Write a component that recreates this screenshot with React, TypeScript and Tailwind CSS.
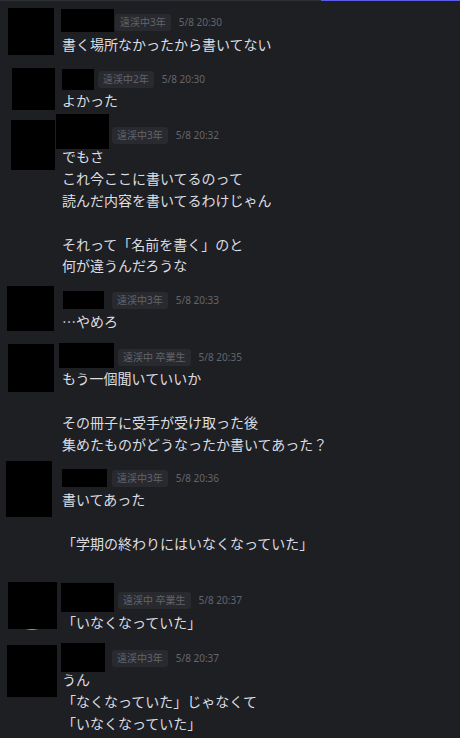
import React from "react";

type Msg = {
  mt: string;
  avatar: string;
  name: string;
  tag: string;
  tagMl: string;
  time: string;
  lines: string[];
  glow?: boolean;
};

const messages: Msg[] = [
  {
    mt: "mt-[11.5px]",
    avatar: "left-[8px] top-[-3.5px] w-[46px] h-[47px]",
    name: "left-[61px] top-[-2.5px] w-[53px] h-[23px]",
    tag: "遠渓中3年",
    tagMl: "ml-[53px]",
    time: "5/8 20:30",
    lines: ["書く場所なかったから書いてない"],
  },
  {
    mt: "mt-[13.2px]",
    avatar: "left-[12px] top-[-0.5px] w-[43px] h-[42px]",
    name: "left-[62px] top-[0.5px] w-[32px] h-[21px]",
    tag: "遠渓中2年",
    tagMl: "ml-[36px]",
    time: "5/8 20:30",
    lines: ["よかった"],
  },
  {
    mt: "mt-[12.2px]",
    avatar: "left-[11px] top-[-4.5px] w-[44px] h-[50px]",
    name: "left-[56px] top-[-10.5px] w-[53px] h-[35px]",
    tag: "遠渓中3年",
    tagMl: "ml-[50px]",
    time: "5/8 20:32",
    lines: [
      "でもさ",
      "これ今ここに書いてるのって",
      "読んだ内容を書いてるわけじゃん",
      "",
      "それって「名前を書く」のと",
      "何が違うんだろうな",
    ],
  },
  {
    mt: "mt-[12.2px]",
    avatar: "left-[7px] top-[-3.5px] w-[47px] h-[45px]",
    name: "left-[63px] top-[1.5px] w-[41px] h-[18px]",
    tag: "遠渓中3年",
    tagMl: "ml-[50px]",
    time: "5/8 20:33",
    lines: ["…やめろ"],
  },
  {
    mt: "mt-[13.2px]",
    avatar: "left-[8px] top-[-2.5px] w-[46px] h-[48px]",
    name: "left-[59px] top-[-3.5px] w-[55px] h-[25px]",
    tag: "遠渓中 卒業生",
    tagMl: "ml-[56px]",
    time: "5/8 20:35",
    lines: [
      "もう一個聞いていいか",
      "",
      "その冊子に受手が受け取った後",
      "集めたものがどうなったか書いてあった？",
    ],
  },
  {
    mt: "mt-[11.8px]",
    avatar: "left-[6px] top-[-6.5px] w-[46px] h-[56px]",
    name: "left-[62px] top-[1.5px] w-[45px] h-[18px]",
    tag: "遠渓中3年",
    tagMl: "ml-[50px]",
    time: "5/8 20:36",
    lines: ["書いてあった", "", "「学期の終わりにはいなくなっていた」", ""],
  },
  {
    mt: "mt-[13.3px]",
    avatar: "left-[8px] top-[-8px] w-[49px] h-[47px]",
    name: "left-[61px] top-[-7px] w-[53px] h-[29px]",
    tag: "遠渓中 卒業生",
    tagMl: "ml-[56px]",
    time: "5/8 20:37",
    lines: ["「いなくなっていた」"],
    glow: true,
  },
  {
    mt: "mt-[13.7px]",
    avatar: "left-[7px] top-[-2.5px] w-[50px] h-[52px]",
    name: "left-[61px] top-[-4.5px] w-[44px] h-[29px]",
    tag: "遠渓中3年",
    tagMl: "ml-[50px]",
    time: "5/8 20:37",
    lines: ["うん", "「なくなっていた」じゃなくて", "「いなくなっていた」"],
  },
];

function Message({ m }: { m: Msg }) {
  return (
    <div className={`relative pl-[62px] ${m.mt}`}>
      <div className="flex h-[22px] items-center">
        <span
          className={`${m.tagMl} flex h-[17px] items-center rounded-[3px] bg-[#292a2f] px-[5px] text-[10px] text-[#62646b]`}
        >
          {m.tag}
        </span>
        <span className="ml-[8px] text-[10px] text-[#63656c]">{m.time}</span>
      </div>
      <div className="font-['Noto_Sans_CJK_JP',sans-serif] text-[14px] leading-[21.8px] text-[#dcdde1]">
        {m.lines.map((l, i) => (
          <div key={i} className="h-[21.8px] whitespace-pre">
            {l}
          </div>
        ))}
      </div>
      {m.glow && (
        <div className="absolute left-[26px] top-[38.5px] h-[2px] w-[12px] rounded-full bg-gradient-to-r from-[#5a3a10] via-[#e0952e] to-[#5a3a10]" />
      )}
      <div className={`absolute bg-black ${m.avatar}`} />
      <div className={`absolute bg-black ${m.name}`} />
    </div>
  );
}

export default function App() {
  return (
    <div
      className="h-[738px] w-[460px] overflow-hidden bg-[#1e1f23]"
      style={{ fontFamily: '"Noto Sans", "Noto Sans CJK JP", sans-serif' }}
    >
      <div className="flex h-px">
        <div className="w-[321px] bg-[#2f3035]" />
        <div className="flex-1 bg-[#5b5ce8]" />
      </div>
      <div className="-mt-px">
        {messages.map((m, i) => (
          <Message key={i} m={m} />
        ))}
      </div>
    </div>
  );
}
